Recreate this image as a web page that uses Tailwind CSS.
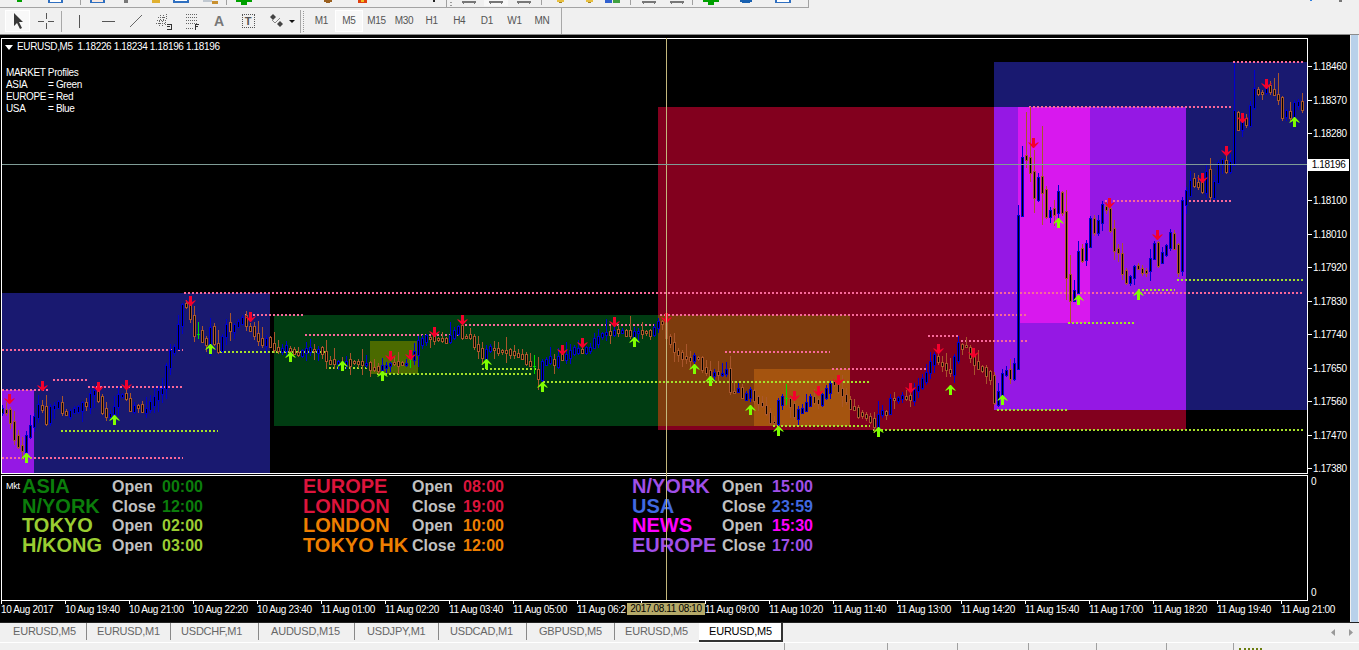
<!DOCTYPE html>
<html lang="en">
<head>
    <meta charset="UTF-8">
    <title>EURUSD,M5</title>
    <script src="https://cdn.jsdelivr.net/npm/@tailwindcss/browser@4"></script>
</head>
<body class="bg-[#f0f0f0] overflow-hidden font-['Liberation_Sans',sans-serif]">
<div class="flex flex-col w-[1359px] h-[650px] overflow-hidden">

    <!-- Top toolbar, only its lower edge is in view -->
    <svg class="block shrink-0" width="1359" height="8" viewBox="0 0 1359 8" shape-rendering="crispEdges">
        <rect x="0" y="7" width="809" height="1" fill="#a3a3a3"/>
        <rect x="808" y="0" width="1" height="8" fill="#a3a3a3"/>
        <rect x="17" y="0" width="5" height="2" fill="#00a000"/>
        <rect x="48" y="0" width="15" height="3" fill="#2f6fc0"/><rect x="50" y="0" width="11" height="2" fill="#fff"/>
        <rect x="80" y="0" width="1" height="5" fill="#a0a0a0"/>
        <rect x="90" y="0" width="15" height="3" fill="#2f6fc0"/><rect x="92" y="0" width="11" height="2" fill="#f8e8e0"/>
        <rect x="124" y="0" width="4" height="3" fill="#777"/>
        <rect x="152" y="0" width="8" height="3" fill="#e0b030"/>
        <rect x="173" y="0" width="16" height="3" fill="#2f6fc0"/><rect x="175" y="0" width="12" height="1" fill="#fff"/>
        <rect x="203" y="0" width="9" height="2" fill="#c0c8d0"/><rect x="212" y="1" width="6" height="3" fill="#c89030"/>
        <rect x="226" y="0" width="1" height="5" fill="#a0a0a0"/>
        <rect x="236" y="0" width="16" height="2" fill="#00a000"/><rect x="241" y="0" width="6" height="5" fill="#00a000"/>
        <rect x="324" y="0" width="8" height="2" fill="#9a6020"/><rect x="326" y="2" width="4" height="1" fill="#9a6020"/>
        <rect x="358" y="0" width="9" height="3" fill="#e04010"/><rect x="361" y="0" width="3" height="2" fill="#f0c020"/>
        <rect x="433" y="0" width="2" height="2" fill="#222"/>
        <rect x="446" y="0" width="1" height="7" fill="#a0a0a0"/>
        <rect x="450" y="2" width="2" height="1" fill="#999"/><rect x="450" y="5" width="2" height="1" fill="#999"/>
        <rect x="462" y="1" width="14" height="2" fill="#777"/><rect x="463" y="3" width="1" height="1" fill="#777"/><rect x="474" y="3" width="1" height="1" fill="#777"/>
        <rect x="484" y="0" width="24" height="6" fill="#f8f8f8"/>
        <rect x="489" y="1" width="14" height="2" fill="#777"/><rect x="490" y="3" width="1" height="1" fill="#777"/><rect x="501" y="3" width="1" height="1" fill="#777"/>
        <rect x="517" y="1" width="14" height="2" fill="#777"/><rect x="518" y="3" width="1" height="1" fill="#777"/><rect x="529" y="3" width="1" height="1" fill="#777"/>
        <rect x="541" y="0" width="1" height="5" fill="#a0a0a0"/>
        <rect x="557" y="0" width="7" height="2" fill="#e8c040"/><rect x="559" y="2" width="3" height="1" fill="#a08020"/>
        <rect x="586" y="0" width="7" height="2" fill="#e8c040"/><rect x="588" y="2" width="3" height="1" fill="#a08020"/>
        <rect x="605" y="0" width="7" height="3" fill="#3060d0"/><rect x="613" y="0" width="7" height="3" fill="#40a040"/>
        <rect x="630" y="0" width="1" height="5" fill="#a0a0a0"/>
        <rect x="642" y="1" width="14" height="2" fill="#777"/><rect x="643" y="3" width="1" height="1" fill="#777"/><rect x="654" y="3" width="1" height="1" fill="#777"/>
        <rect x="670" y="1" width="14" height="2" fill="#777"/><rect x="671" y="3" width="1" height="1" fill="#777"/><rect x="682" y="3" width="1" height="1" fill="#777"/>
        <rect x="692" y="0" width="1" height="5" fill="#a0a0a0"/>
        <rect x="703" y="0" width="16" height="2" fill="#00a000"/><rect x="708" y="0" width="6" height="5" fill="#00a000"/>
        <rect x="740" y="0" width="12" height="2" fill="#1860b0"/><rect x="742" y="2" width="8" height="1" fill="#1860b0"/>
        <rect x="775" y="0" width="16" height="3" fill="#2f6fc0"/><rect x="777" y="0" width="12" height="2" fill="#fff"/>
        <rect x="1310" y="0" width="2" height="1" fill="#3080e0"/>
        <rect x="1339" y="0" width="3" height="2" fill="#777"/>
    </svg>

    <!-- Drawing tools and periods -->
    <div class="flex items-center h-[26px] shrink-0">
        <div class="w-[5px]"></div>
        <div class="w-[25px] h-[22px] border border-white bg-[#f8f8f8] flex items-center justify-center">
            <svg width="12" height="18" viewBox="0 0 12 18"><polygon points="2,1 2,14 5,11 8,17 10,16 7,10 11,10" fill="#383838"/></svg>
        </div>
        <div class="w-[31px] flex justify-center">
            <svg width="16" height="16" viewBox="0 0 16 16" shape-rendering="crispEdges"><path d="M8 0v6M8 10v6M0 8h6M10 8h6" stroke="#555" fill="none"/></svg>
        </div>
        <div class="w-px h-[21px] bg-[#a8a8a8] mr-px"></div>
        <div class="w-[32px] flex justify-center"><div class="w-px h-[13px] bg-[#555]"></div></div>
        <div class="w-[26px] flex justify-center"><div class="w-[13px] h-px bg-[#555]"></div></div>
        <div class="w-[30px] flex justify-center">
            <svg width="14" height="14" viewBox="0 0 14 14"><path d="M1 13L13 1" stroke="#666" fill="none"/></svg>
        </div>
        <div class="w-[24px] flex justify-center">
            <svg width="17" height="17" viewBox="0 0 17 17" shape-rendering="crispEdges"><path d="M1 10h10M2 7h10M3 4h8M4 13L6 2M7 13L9 2M10 12L12 1" stroke="#666" fill="none" stroke-dasharray="1 1"/><path d="M12 11h4v5h-4M12 13h3" stroke="#333" fill="none"/></svg>
        </div>
        <div class="w-[34px] flex justify-center">
            <svg width="15" height="17" viewBox="0 0 15 17" shape-rendering="crispEdges"><path d="M1 1h11M1 4h11M1 7h11M1 10h11M1 15h8" stroke="#666" fill="none" stroke-dasharray="1 1"/><path d="M10 11h4M10 11v6M10 13h3" stroke="#333" fill="none"/></svg>
        </div>
        <div class="w-[20px] text-center text-[14px] font-bold leading-none text-[#777]">A</div>
        <div class="w-[38px] flex justify-center">
            <div class="w-[13px] h-[14px] border border-dotted border-[#555] text-[11px] font-bold leading-[12px] text-center text-[#555]">T</div>
        </div>
        <div class="w-[33px] flex items-center pl-[2px] gap-[5px]">
            <svg width="15" height="14" viewBox="0 0 15 14"><path d="M1 3L4 0L7 3L4 6Z" fill="#444"/><path d="M3 6L6 9L11 4" stroke="#888" fill="none"/><path d="M8 10L11 7L14 10L11 13Z" fill="#444"/></svg>
            <svg width="6" height="3" viewBox="0 0 6 3"><path d="M0 0H6L3 3Z" fill="#111"/></svg>
        </div>
        <div class="w-px h-[23px] bg-[#a8a8a8]"></div>
        <div class="w-[2px] h-[21px] ml-[2px] border-l border-dotted border-[#999]"></div>
        <div class="flex ml-[2.5px] text-[10px] tracking-[-0.3px] text-[#555]">
            <div class="w-[27.6px] h-[22px] leading-[22px] text-center">M1</div>
            <div class="w-[27.6px] h-[22px] leading-[20px] text-center bg-[#f8f8f8] border border-white">M5</div>
            <div class="w-[27.6px] h-[22px] leading-[22px] text-center">M15</div>
            <div class="w-[27.6px] h-[22px] leading-[22px] text-center">M30</div>
            <div class="w-[27.6px] h-[22px] leading-[22px] text-center">H1</div>
            <div class="w-[27.6px] h-[22px] leading-[22px] text-center">H4</div>
            <div class="w-[27.6px] h-[22px] leading-[22px] text-center">D1</div>
            <div class="w-[27.6px] h-[22px] leading-[22px] text-center">W1</div>
            <div class="w-[27.6px] h-[22px] leading-[22px] text-center">MN</div>
        </div>
        <div class="w-px h-[26px] bg-[#a8a8a8] ml-[5px]"></div>
    </div>
    <div class="h-px bg-[#8c8c8c] shrink-0"></div>

    <!-- Chart window -->
    <div class="flex h-[587px] shrink-0">
        <div class="relative w-[1350px] bg-black pt-[3px] pl-px text-white text-[10px] tracking-[-0.35px]">

            <!-- Price chart -->
            <div class="flex h-[436px]">
                <div class="relative w-[1307px] border border-white">
                    <svg id="chart" class="block" width="1305" height="434" viewBox="2 39 1305 434"></svg>
                    <div class="absolute left-[4px] top-[2px] leading-[12px] text-[10px]">
                        <div class="flex items-center h-[12px]">
                            <svg class="mr-[4px] ml-[-1px]" width="8" height="5" viewBox="0 0 8 5"><path d="M0 0H8L4 5Z" fill="#fff"/></svg>
                            <span class="whitespace-pre">EURUSD,M5  1.18226 1.18234 1.18196 1.18196</span>
                        </div>
                        <div class="mt-[14px]">MARKET Profiles</div>
                        <div class="flex"><span class="w-[42px]">ASIA</span><span>= Green</span></div>
                        <div class="flex"><span class="w-[42px]">EUROPE</span><span>= Red</span></div>
                        <div class="flex"><span class="w-[42px]">USA</span><span>= Blue</span></div>
                    </div>
                </div>
                <!-- Price scale -->
                <div id="scale" class="relative w-[42px] pt-[12px]"></div>
            </div>

            <!-- Indicator window -->
            <div class="flex h-[126px] mt-px">
                <div class="relative w-[1307px] border border-white flex pl-[4px] pt-[1px]">
                    <div class="w-[16px] text-[9px] leading-[16px] tracking-[-0.3px] pt-[1px]">Mkt</div>
                    <div class="w-[281px] grid grid-cols-[90px_50px_60px] auto-rows-[19.7px] content-start font-bold text-[16px] leading-[19.7px] tracking-normal">
                        <span class="text-[20px] text-[#0b7d0b]">ASIA</span><span class="text-[#c0c0c0]">Open</span><span class="text-[#0b7d0b]">00:00</span>
                        <span class="text-[20px] text-[#0b7d0b]">N/YORK</span><span class="text-[#c0c0c0]">Close</span><span class="text-[#0b7d0b]">12:00</span>
                        <span class="text-[20px] text-[#9acd32]">TOKYO</span><span class="text-[#c0c0c0]">Open</span><span class="text-[#9acd32]">02:00</span>
                        <span class="text-[20px] text-[#9acd32]">H/KONG</span><span class="text-[#c0c0c0]">Open</span><span class="text-[#9acd32]">03:00</span>
                    </div>
                    <div class="w-[329px] grid grid-cols-[109px_51px_60px] auto-rows-[19.7px] content-start font-bold text-[16px] leading-[19.7px] tracking-normal">
                        <span class="text-[20px] text-[#dc143c]">EUROPE</span><span class="text-[#c0c0c0]">Open</span><span class="text-[#dc143c]">08:00</span>
                        <span class="text-[20px] text-[#dc143c]">LONDON</span><span class="text-[#c0c0c0]">Close</span><span class="text-[#dc143c]">19:00</span>
                        <span class="text-[20px] text-[#ee7f00]">LONDON</span><span class="text-[#c0c0c0]">Open</span><span class="text-[#ee7f00]">10:00</span>
                        <span class="text-[20px] text-[#ee7f00] whitespace-nowrap">TOKYO HK</span><span class="text-[#c0c0c0]">Close</span><span class="text-[#ee7f00]">12:00</span>
                    </div>
                    <div class="grid grid-cols-[90px_50px_60px] auto-rows-[19.7px] content-start font-bold text-[16px] leading-[19.7px] tracking-normal">
                        <span class="text-[20px] text-[#a04fe8]">N/YORK</span><span class="text-[#c0c0c0]">Open</span><span class="text-[#a04fe8]">15:00</span>
                        <span class="text-[20px] text-[#4169e1]">USA</span><span class="text-[#c0c0c0]">Close</span><span class="text-[#4169e1]">23:59</span>
                        <span class="text-[20px] text-[#ff00ff]">NEWS</span><span class="text-[#c0c0c0]">Open</span><span class="text-[#ff00ff]">15:30</span>
                        <span class="text-[20px] text-[#a04fe8]">EUROPE</span><span class="text-[#c0c0c0]">Close</span><span class="text-[#a04fe8]">17:00</span>
                    </div>
                </div>
                <div class="w-[42px] flex flex-col justify-between pl-[3px] pt-px pb-[2px] leading-[12px]">
                    <span>0</span><span>0</span>
                </div>
            </div>

            <!-- Time scale -->
            <div id="times" class="flex w-[1349px] overflow-hidden"></div>

            <!-- Crosshair -->
            <div class="absolute left-[666px] top-[3px] w-px h-[562px] bg-[#c4b87c]"></div>
            <div class="absolute left-[2px] top-[129px] w-[1305px] h-px bg-[#7f9c96]"></div>
            <div class="absolute left-[1308px] top-[124px] w-[41px] h-[12px] bg-white text-black text-center leading-[12px]">1.18196</div>
            <div class="absolute left-[627px] top-[568px] w-[78px] h-[12px] bg-[#b5a968] text-black text-center leading-[12px]">2017.08.11 08:10</div>
        </div>
        <div class="w-px bg-[#f0f0f0]"></div>
        <div class="w-[7px] bg-[#b9d1ea]"></div>
    </div>

    <!-- Chart tabs -->
    <div class="h-px bg-[#222] shrink-0"></div>
    <div class="flex items-start h-[18px] shrink-0 text-[11px] tracking-[-0.2px] text-[#666] leading-[17px]">
        <div class="w-[87px] pl-[13px] border-r border-[#888]">EURUSD,M5</div>
        <div class="w-[84px] pl-[10px] border-r border-[#888]">EURUSD,M1</div>
        <div class="w-[88px] pl-[10px] border-r border-[#888]">USDCHF,M1</div>
        <div class="w-[96px] pl-[12px] border-r border-[#888]">AUDUSD,M15</div>
        <div class="w-[84px] pl-[12px] border-r border-[#888]">USDJPY,M1</div>
        <div class="w-[88px] pl-[11px] border-r border-[#888]">USDCAD,M1</div>
        <div class="w-[88px] pl-[12px] border-r border-[#888]">GBPUSD,M5</div>
        <div class="w-[84px] pl-[10px]">EURUSD,M5</div>
        <div class="w-[84px] h-[19px] pl-[10px] bg-white text-black border-r-2 border-b-2 border-[#333]">EURUSD,M5</div>
        <div class="flex-1 flex justify-end items-center gap-[14px] h-[18px] pr-[6px]">
            <svg width="4" height="7" viewBox="0 0 4 7"><path d="M4 0V7L0 3.5Z" fill="#999"/></svg>
            <svg width="4" height="7" viewBox="0 0 4 7"><path d="M0 0V7L4 3.5Z" fill="#999"/></svg>
        </div>
    </div>

    <!-- Status bar -->
    <div class="h-px bg-white shrink-0 mt-[1px]"></div>
    <div class="flex h-[8px] text-[0px] bg-[#f0f0f0]">
        <div class="w-[785px] border-r border-[#a0a0a0]"></div>
        <div class="w-[103px] border-r border-[#a0a0a0]"></div>
        <div class="w-[70px] border-r border-[#a0a0a0]"></div>
        <div class="w-[71px] border-r border-[#a0a0a0]"></div>
        <div class="w-[68px] border-r border-[#a0a0a0]"></div>
        <div class="w-[70px] border-r border-[#a0a0a0]"></div>
        <div class="w-[67px] border-r border-[#a0a0a0]"></div>
        <div class="w-[23px] h-[2px] ml-[5px] mt-[5px] border-t-2 border-dotted border-[#6b7d10]"></div>
    </div>
</div>

<script>
    // close price of the bars as x,y in page pixels, read off the picture
    const pts = [2,412,6,410,10,421,14,437,18,445,22,450,26,437,30,427,38,408,42,407,46,423,50,408,54,407,58,403,62,413,66,413,70,411,74,410,78,407,82,405,86,404,90,395,94,392,98,398,102,410,106,415,110,415,114,407,118,397,122,395,126,398,130,408,134,408,138,408,142,412,146,408,150,403,154,397,158,392,162,388,166,365,170,352,174,348,178,325,182,303,186,305,190,318,194,333,198,333,202,340,206,343,210,327,214,345,218,350,222,338,226,325,230,330,234,326,238,323,242,318,246,325,250,327,254,335,258,340,262,342,266,339,270,345,278,350,286,348,298,355,302,350,310,350,318,350,322,353,327,362,338,363,350,363,367,365,374,370,382,367,390,363,398,365,407,363,414,353,418,343,426,336,430,337,438,338,447,342,454,332,458,328,462,337,467,338,470,338,478,350,482,357,487,347,491,350,498,350,507,352,514,353,522,358,531,367,538,378,542,363,550,360,554,363,558,357,563,358,570,352,578,350,587,350,595,340,603,333,614,332,618,333,627,333,634,333,642,332,650,332,658,323,662,323,666,337,670,343,674,350,682,357,690,358,698,358,702,368,710,375,718,375,726,370,730,390,734,393,738,388,742,397,750,392,754,400,762,405,770,422,774,422,778,402,782,398,786,398,794,415,802,410,810,398,818,405,822,397,830,385,834,385,838,390,846,400,850,408,858,413,866,417,874,425,878,413,886,412,890,400,898,398,902,397,910,398,914,390,922,380,926,372,930,362,934,357,938,362,946,368,950,372,958,345,965,346,975,365,985,372,990,377,994,402,998,393,1002,373,1006,370,1010,378,1014,365,1018,216,1022,158,1026,158,1030,172,1034,198,1038,178,1042,192,1046,216,1050,210,1054,213,1058,193,1062,210,1066,275,1070,298,1074,292,1078,250,1082,260,1086,244,1090,220,1094,232,1098,222,1102,207,1106,209,1110,228,1114,248,1118,252,1122,272,1126,282,1130,276,1134,267,1138,267,1142,272,1146,270,1150,258,1154,244,1158,263,1162,253,1166,248,1170,235,1174,248,1178,270,1182,202,1186,193,1190,182,1194,183,1198,185,1202,193,1206,172,1210,195,1214,180,1218,163,1222,162,1226,172,1230,163,1234,112,1238,128,1242,120,1246,124,1250,107,1254,90,1258,91,1262,93,1266,88,1270,90,1274,95,1278,100,1282,116,1286,112,1290,117,1294,105,1298,103,1302,107];
    const wp = [];
    for (let i = 0; i < pts.length; i += 2) wp.push([pts[i], pts[i + 1]]);

    const closeAt = x => {
        let k = wp.findIndex(p => p[0] >= x);
        if (k <= 0) return wp[0][1];
        const [x0, y0] = wp[k - 1], [x1, y1] = wp[k];
        return y0 + (y1 - y0) * (x - x0) / (x1 - x0);
    };

    let seed = 7;
    const rnd = () => (seed = (seed * 16807) % 2147483647) / 2147483647;

    const rect = (x, y, w, h, fill) => `<rect x="${x}" y="${y}" width="${w}" height="${h}" fill="${fill}"/>`;
    let s = '<g shape-rendering="crispEdges">';

    // session boxes
    [[2,293,268,180,'#191970'],[2,390,32,83,'#9518e4'],[274,315,384,111,'#003c12'],[370,341,48,33,'#4b6a00'],
     [658,107,528,323,'#82001e'],[658,315,192,111,'#7e3c0d'],[754,369,96,57,'#a5540f'],
     [994,62,313,348,'#191970'],[994,107,192,303,'#9518e4'],[1018,107,72,216,'#d818ee']]
        .forEach(r => s += rect(r[0], r[1], r[2], r[3], r[4]));
    s += '</g>';

    // dotted levels
    const level = (a, b, y, c) => s += `<line x1="${a}" x2="${b}" y1="${y}" y2="${y}" stroke="${c}" stroke-width="2" stroke-dasharray="2 2"/>`;
    const pink = '#f8689a', lime = '#a6e02a';
    [[2,50,390],[2,183,350],[53,87,380],[88,183,387],[2,183,458],[184,1303,293],[245,303,315],[305,460,335],[465,660,325],
     [660,1028,315],[725,830,352],[832,927,369],[928,960,336],[961,1027,341],[1029,1231,107],[1233,1303,62],[1105,1231,201]]
        .forEach(l => level(l[0], l[1], l[2], pink));
    [[61,218,431],[220,327,352],[329,373,368],[377,533,374],[482,538,369],[543,870,382],[773,870,426],[873,1303,430],
     [997,1067,410],[1068,1135,323],[1138,1175,290],[1177,1303,280]]
        .forEach(l => level(l[0], l[1], l[2], lime));

    // candles, bull bars blue and bear bars brown, both hollow
    const longWick = {1022:[146,216],1026:[112,168],1030:[107,182],1034:[150,213],1042:[126,225],1234:[63,165],1018:[205,270],1066:[190,300],1070:[255,323],1254:[70,110],1278:[73,105],198:[322,339]};
    const limeBars = {198:1, 786:1, 410:1, 534:1};
    s += '<g shape-rendering="crispEdges">';
    let prev = closeAt(2);
    for (let x = 2; x <= 1302; x += 4) {
        let c = Math.round(closeAt(x) + (rnd() - 0.5) * 2);
        let top = Math.round(Math.min(prev, c) - rnd() * 3), bot = Math.round(Math.max(prev, c) + rnd() * 3);
        if (bot - top < 2) bot = top + 2;
        const col = limeBars[x] ? '#00e000' : c < prev ? '#0000d0' : '#a8562c';
        let hi = top - Math.round(1 + rnd() * rnd() * 14), lo = bot + Math.round(1 + rnd() * rnd() * 12);
        if (longWick[x]) { hi = longWick[x][0]; lo = longWick[x][1]; }
        if (limeBars[x]) {
            s += rect(x, hi, 1, lo - hi, col) + rect(x - 1, top + 2, 3, 1, col);
        } else {
            s += rect(x, hi, 1, lo - hi, col) + rect(x - 1, top, 3, bot - top + 1, col) + rect(x, top + 1, 1, Math.max(bot - top - 1, 0), '#000');
        }
        prev = c;
    }
    s += '</g>';

    // fractal arrows, a narrow stem under a flared head
    const up = (x, y) => s += `<path d="M${x} ${y - 5}h1l4.5 5v1l-3.5 -2V${y + 5}h-3V${y - 1}l-3.5 2v-1Z" fill="#7fff00"/>`;
    const down = (x, y) => s += `<path d="M${x} ${y + 5}h1l4.5 -5v-1l-3.5 2V${y - 5}h-3V${y + 1}l-3.5 -2v1Z" fill="#f4002c"/>`;
    [[26,458],[114,420],[210,349],[290,357],[342,366],[382,376],[486,364],[542,387],[634,342],[694,369],[710,381],[750,410],[778,431],[878,432],[950,390],[1002,400],[1058,223],[1078,300],[1138,295],[1294,122]]
        .forEach(a => up(a[0], a[1]));
    [[9,399],[42,386],[98,387],[126,385],[190,301],[250,317],[390,356],[410,355],[434,332],[462,320],[562,350],[582,343],[614,322],[666,318],[794,396],[818,391],[838,380],[910,388],[938,349],[973,353],[1033,143],[1109,203],[1157,235],[1202,178],[1226,151],[1242,118],[1266,84]]
        .forEach(a => down(a[0], a[1]));
    document.getElementById('chart').innerHTML = s;

    // price scale, one row per 90 points
    const prices = ['1.18460','1.18370','1.18280','','1.18100','1.18010','1.17920','1.17830','1.17740','1.17650','1.17560','1.17470','1.17380'];
    document.getElementById('scale').innerHTML = prices.map(p =>
        `<div class="flex items-center h-[33.5px]"><div class="w-[4px] h-px bg-white"></div><span class="ml-[1px]">${p}</span></div>`).join('');

    // time scale, a label every 16 bars; the crosshair tag hides 06:20's last digit and all of 07:40
    const times = ['10 Aug 2017','10 Aug 19:40','10 Aug 21:00','10 Aug 22:20','10 Aug 23:40','11 Aug 01:00','11 Aug 02:20','11 Aug 03:40','11 Aug 05:00','11 Aug 06:2','','11 Aug 09:00','11 Aug 10:20','11 Aug 11:40','11 Aug 13:00','11 Aug 14:20','11 Aug 15:40','11 Aug 17:00','11 Aug 18:20','11 Aug 19:40','11 Aug 21:00'];
    document.getElementById('times').innerHTML = times.map(t =>
        `<div class="w-[64px] shrink-0"><div class="w-px h-[3px] bg-white"></div><div class="leading-[12px] whitespace-nowrap">${t}</div></div>`).join('');
</script>
</body>
</html>
